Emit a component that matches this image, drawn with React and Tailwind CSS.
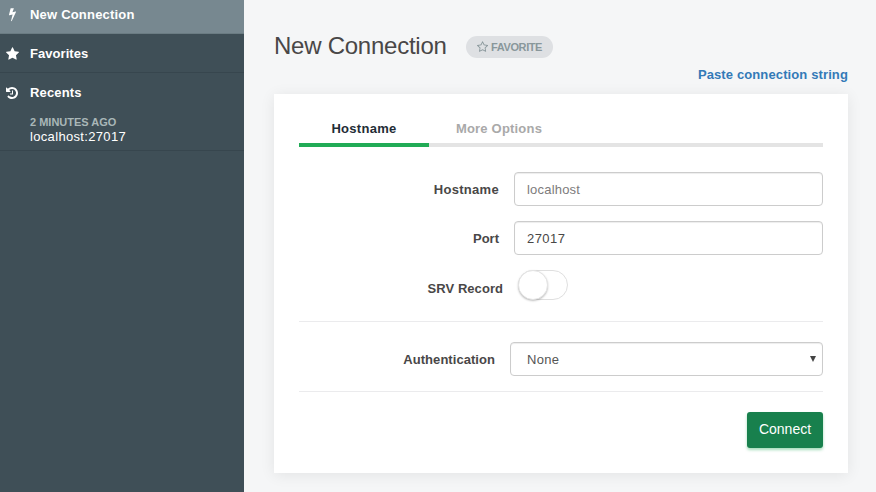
const STAR =
  'M1664 647q0 22-26 48l-363 354 86 500q1 7 1 20 0 21-10.5 35.5t-30.5 14.5q-19 0-40-12l-449-236-449 236q-22 12-40 12-21 0-31.5-14.5t-10.5-35.5q0-6 2-20l86-500-364-354q-25-27-25-48 0-37 56-46l502-73 225-455q19-41 49-41t49 41l225 455 502 73q56 9 56 46z';
const STAR_OUTLINE =
  'M1137 1004l306-297-422-62-189-382-189 382-422 62 306 297-73 421 378-199 377 199zm527-357q0 22-26 48l-363 354 86 500q1 7 1 20 0 50-41 50-19 0-40-12l-449-236-449 236q-22 12-40 12-21 0-31.5-14.5t-10.5-35.5q0-6 2-20l86-500-364-354q-25-27-25-48 0-37 56-46l502-73 225-455q19-41 49-41t49 41l225 455 502 73q56 9 56 46z';
const BOLT =
  'M885 454q18 20 7 44L352 1655q-13 25-42 25-4 0-14-2-17-5-25.5-19t-4.5-30l197-808-406 101q-4 1-12 1-18 0-31-11-18-15-13-39l201-825q4-14 16-23t28-9h328q19 0 32 12.5t13 29.5q0 8-5 18l-171 463 396-98q8-2 12-2 19 0 34 15z';
const HISTORY =
  'M1536 896q0 156-61 298t-164 245-245 164-298 61q-172 0-327-72.5T177 1387q-7-10-6.5-22.5t8.5-20.5l137-138q10-9 25-9 16 2 23 12 73 95 179 147t225 52q104 0 198.5-40.5T1130 1258t109.5-163.5T1280 896t-40.5-198.5T1130 534 966.5 424.5 768 384q-98 0-188 35.5T420 521l137 138q31 30 14 69-17 40-59 40H64q-26 0-45-19T0 704V256q0-42 40-59 39-17 69 14l130 129q107-101 244.5-156.5T768 128q156 0 298 61t245 164 164 245 61 298zM896 608v448q0 14-9 23t-23 9H544q-14 0-23-9t-9-23v-64q0-14 9-23t23-9h224V608q0-14 9-23t23-9h64q14 0 23 9t9 23z';

function Icon({ path, width, className }) {
  return (
    <svg viewBox={`0 0 ${width} 1792`} fill="currentColor" className={className}>
      <path d={path} />
    </svg>
  );
}

function NavItem({ path, width, label, tracking }) {
  return (
    <div className="flex h-[38px] shrink-0 items-center pt-[2px]">
      <span className="flex w-6 justify-center pb-px">
        <Icon path={path} width={width} className="h-[14px]" />
      </span>
      <span className={`ml-[6px] text-[13px] leading-4 font-bold ${tracking}`}>{label}</span>
    </div>
  );
}

function Sidebar() {
  return (
    <aside className="h-full w-[244px] shrink-0 bg-[#3f4f57] text-white">
      <div className="flex h-[34px] flex-col justify-end border-b border-[#6b7c83] bg-[#778890]">
        <NavItem path={BOLT} width={896} label="New Connection" tracking="tracking-[0.2px]" />
      </div>
      <div className="border-b border-[#37464e]">
        <NavItem path={STAR} width={1664} label="Favorites" tracking="tracking-[0.05px]" />
      </div>
      <div className="h-[78px] border-b border-[#37464e]">
        <NavItem path={HISTORY} width={1536} label="Recents" tracking="tracking-[0.15px]" />
        <div className="pt-1 pl-[30px]">
          <div className="text-[11px] leading-[14px] font-bold text-[#a9b7b8]">2 MINUTES AGO</div>
          <div className="pt-px text-[13px] leading-[14px] tracking-[0.33px]">localhost:27017</div>
        </div>
      </div>
    </aside>
  );
}

function Label({ className, children }) {
  return (
    <label className={`text-right text-[13px] font-bold text-[#494747] ${className}`}>
      {children}
    </label>
  );
}

const FIELD =
  'h-[34px] rounded-[4px] border border-[#ccc] bg-white text-[13px] shadow-[inset_0_1px_1px_rgba(0,0,0,0.075)] outline-none';

export default function App() {
  return (
    <div className="flex h-[492px] w-[876px] overflow-hidden bg-[#f5f6f7] font-['Liberation_Sans',Arial,sans-serif]">
      <Sidebar />
      <main className="flex-1 pt-[30px] pr-[28px] pl-[30px]">
        <header className="flex h-8 items-center">
          <h1 className="w-[173px] text-[24px] leading-8 tracking-[-0.25px] whitespace-nowrap text-[#494747]">
            New Connection
          </h1>
          <button className="mt-[2px] ml-[19px] flex h-[22px] w-[87px] items-center justify-center gap-[3px] rounded-full bg-[#dee0e3] text-[11px] font-bold text-[#89979b]">
            <Icon path={STAR_OUTLINE} width={1664} className="h-[12px]" />
            <span className="tracking-[-0.4px]">FAVORITE</span>
          </button>
        </header>
        <div className="flex h-8 justify-end pt-1">
          <a className="text-[13px] leading-[17px] font-bold tracking-[0.12px] text-[#337ab7]">
            Paste connection string
          </a>
        </div>
        <section className="h-[379px] bg-white px-[25px] pt-5 shadow-[0_2px_14px_rgba(0,0,0,0.08)]">
          <nav className="flex h-[33px] border-b-4 border-[#e4e4e4] text-[13px] leading-[30px] font-bold">
            <div className="h-[33px] w-[130px] border-b-4 border-[#21ab56] text-center tracking-[0.3px] text-[#1f2d36]">
              Hostname
            </div>
            <div className="w-[140px] text-center tracking-[0.2px] text-[#a9a9a9]">More Options</div>
          </nav>
          <div className="mt-[25px] flex items-center justify-between">
            <Label className="w-[200px] pt-[2px] leading-4 tracking-[0.3px]">Hostname</Label>
            <input
              className={`${FIELD} w-[309px] px-3 tracking-[0.2px] placeholder:text-[#7d7b7b]`}
              placeholder="localhost"
            />
          </div>
          <div className="mt-[15px] flex items-center justify-between">
            <Label className="w-[200px] pt-[2px] leading-4">Port</Label>
            <input
              className={`${FIELD} w-[309px] px-3 tracking-[0.45px] text-[#494747]`}
              defaultValue="27017"
            />
          </div>
          <div className="mt-[15px] flex h-[30px] items-start">
            <Label className="mt-[11px] w-[204px] leading-4 tracking-[0.05px]">SRV Record</Label>
            <div className="ml-[15px] h-[30px] w-[50px] rounded-full border border-[#dfdfdf] bg-white">
              <div className="-mt-px -ml-px size-[30px] rounded-full border border-[#e4e4e4] bg-white shadow-[0_1px_2px_rgba(0,0,0,0.25)]" />
            </div>
          </div>
          <hr className="mt-[21px] border-[#ebebed]" />
          <div className="mt-[20px] flex items-center justify-between">
            <Label className="w-[196px] pt-[2px] leading-4 tracking-[0.05px]">Authentication</Label>
            <div
              className={`${FIELD} flex w-[313px] items-center justify-between pr-[6px] pl-4 text-[#555]`}
            >
              <span className="pt-px tracking-[0.3px]">None</span>
              <svg viewBox="0 0 6 6" className="size-[6px]" fill="#444">
                <path d="M0 0h6L3 6z" />
              </svg>
            </div>
          </div>
          <hr className="mt-[15px] border-[#ebebed]" />
          <div className="mt-5 flex justify-end">
            <button className="h-9 w-[76px] rounded-[3px] bg-[#18804d] pb-px text-[14px] text-white shadow-[0_2px_3px_rgba(33,171,86,0.4)]">
              Connect
            </button>
          </div>
        </section>
      </main>
    </div>
  );
}
